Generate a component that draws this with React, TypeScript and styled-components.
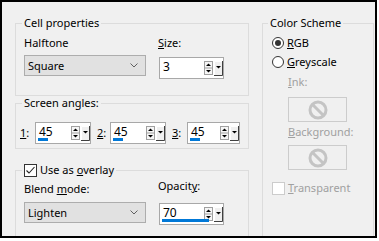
import React from "react";
import styled, { createGlobalStyle } from "styled-components";

const Global = createGlobalStyle`
  html, body { margin: 0; padding: 0; background: #fff; }
  body {
    font-family: "Noto Sans", "Segoe UI", sans-serif;
    font-size: 11px;
    color: #000;
  }
`;

const Frame = styled.div`
  box-sizing: border-box;
  width: 377px;
  height: 238px;
  border: 2px solid #000;
  background: #f0f0f0;
  overflow: hidden;
  display: grid;
  grid-template-columns: 234px 112px;
  column-gap: 13px;
  align-items: start;
  padding: 14px 0 0 13px;
`;

const Column = styled.div`
  display: flex;
  flex-direction: column;
`;

const Group = styled.fieldset<{ $pad: string; $mt?: number }>`
  margin: ${(p) => p.$mt ?? 0}px 0 0 0;
  min-width: 0;
  border: 1px solid #dcdcdc;
  padding: ${(p) => p.$pad};
`;

const Legend = styled.legend<{ $ml: number; $h?: number }>`
  padding: 0 2px;
  margin-left: ${(p) => p.$ml}px;
  line-height: ${(p) => p.$h ?? 14}px;
  height: ${(p) => p.$h ?? 14}px;
  display: flex;
  align-items: center;
  gap: 3px;
`;

const Key = styled.span`
  text-decoration: underline;
  text-underline-offset: 1px;
`;

const Label = styled.div<{ $dim?: boolean; $mt?: number }>`
  line-height: 16px;
  height: 16px;
  white-space: nowrap;
  color: ${(p) => (p.$dim ? "#a0a0a0" : "#000")};
  margin-top: ${(p) => p.$mt ?? 0}px;
`;

const FieldGrid = styled.div`
  display: grid;
  grid-template-columns: 122px 66px;
  column-gap: 12px;
`;

const Field = styled.div<{ $gap: number; $mt?: number }>`
  display: flex;
  flex-direction: column;
  gap: ${(p) => p.$gap}px;
  margin-top: ${(p) => p.$mt ?? 0}px;
`;

const Select = styled.div`
  box-sizing: border-box;
  width: 122px;
  height: 21px;
  background: #e1e1e1;
  border: 1px solid #adadad;
  display: flex;
  align-items: center;
  justify-content: space-between;
  padding: 0 7px 0 3px;
  line-height: 16px;
`;

const SpinBox = styled.div<{ $w: number; $ml?: number }>`
  box-sizing: border-box;
  position: relative;
  width: ${(p) => p.$w}px;
  height: 22px;
  margin-left: ${(p) => p.$ml ?? 0}px;
  background: #fff;
  border: 1px solid #a8a8a8;
  display: flex;
  align-items: center;
  padding: 0 0 0 3px;
`;

const SpinValue = styled.span`
  flex: 1;
  line-height: 16px;
  margin-top: -2px;
  font-size: 12px;
`;

const SpinButtons = styled.div`
  display: flex;
  align-items: flex-start;
  gap: 1px;
  margin-top: 1px;
`;

const Bar = styled.div`
  position: absolute;
  left: 2px;
  bottom: 2px;
  height: 3px;
  background: #0078d7;
`;

const AnglesRow = styled.div`
  display: grid;
  grid-template-columns: 15px 62px 13px 62px 15px 53px;
  align-items: center;
`;

const AngleKey = styled.span`
  line-height: 16px;
`;

const Check = styled.span<{ $dim?: boolean }>`
  box-sizing: border-box;
  width: 13px;
  height: 13px;
  background: #fff;
  border: 1px solid ${(p) => (p.$dim ? "#cccccc" : "#333")};
  display: inline-flex;
  align-items: center;
  justify-content: center;
  flex: none;
`;

const OptionRow = styled.div<{ $mt?: number; $dim?: boolean }>`
  display: flex;
  align-items: center;
  gap: 3px;
  height: 16px;
  line-height: 16px;
  margin-top: ${(p) => p.$mt ?? 0}px;
  color: ${(p) => (p.$dim ? "#a0a0a0" : "#000")};
`;

const ColorBox = styled.div<{ $mt: number }>`
  box-sizing: border-box;
  width: 59px;
  height: 25px;
  margin: ${(p) => p.$mt}px 0 0 16px;
  border: 1px solid #cccccc;
  display: flex;
  align-items: center;
  justify-content: center;
`;

const Indented = styled.div<{ $mt: number }>`
  margin: ${(p) => p.$mt}px 0 0 16px;
`;

const Chevron = () => (
  <svg width="8" height="5" viewBox="0 0 8 5">
    <path d="M0.5 0.5 L4 4 L7.5 0.5" fill="none" stroke="#606060" strokeWidth="1" />
  </svg>
);

const UpDown = () => (
  <svg width="9" height="14" viewBox="0 0 9 14">
    <rect x="0.5" y="0.5" width="8" height="13" fill="#f6f6f6" stroke="#a0a0a0" />
    <line x1="1" y1="7" x2="8" y2="7" stroke="#a0a0a0" />
    <path d="M2 5 L4.5 2.5 L7 5 Z" fill="#000" />
    <path d="M2 9 L4.5 11.5 L7 9 Z" fill="#000" />
  </svg>
);

const DropButton = () => (
  <svg width="9" height="15" viewBox="0 0 9 15">
    <rect x="0" y="0" width="9" height="15" fill="#f0f0f0" />
    <path d="M0.5 14 V0.5 H8" fill="none" stroke="#ffffff" />
    <path d="M8.5 0 V14.5 H0" fill="none" stroke="#404040" />
    <path d="M2 5 L4.5 7.5 L7 5 Z" fill="#000" />
  </svg>
);

const CheckMark = () => (
  <svg width="11" height="11" viewBox="0 0 11 11">
    <path d="M1.5 5.5 L4 8 L9.5 2" fill="none" stroke="#222" strokeWidth="1.1" />
  </svg>
);

const Radio = ({ checked }: { checked?: boolean }) => (
  <svg width="12" height="12" viewBox="0 0 12 12">
    <circle cx="6" cy="6" r="5.5" fill="#fff" stroke="#333" />
    {checked && <circle cx="6" cy="6" r="3" fill="#333" />}
  </svg>
);

const NoSymbol = () => (
  <svg width="20" height="20" viewBox="0 0 20 20">
    <circle cx="10" cy="10" r="8" fill="none" stroke="#c4c4c4" strokeWidth="3" />
    <line x1="4.5" y1="4.5" x2="15.5" y2="15.5" stroke="#c4c4c4" strokeWidth="3" />
  </svg>
);

type SpinProps = { value: string; width: number; bar?: number; ml?: number };

const Spin = ({ value, width, bar, ml }: SpinProps) => (
  <SpinBox $w={width} $ml={ml}>
    <SpinValue>{value}</SpinValue>
    <SpinButtons>
      <UpDown />
      <DropButton />
    </SpinButtons>
    {bar ? <Bar style={{ width: bar }} /> : null}
  </SpinBox>
);

export default function App() {
  return (
    <>
      <Global />
      <Frame>
        <Column>
          <Group $pad="5px 8px 16px 8px">
            <Legend $ml={-2}>Cell properties</Legend>
            <FieldGrid>
              <Field $gap={4}>
                <Label>Halftone</Label>
                <Select>
                  <span>Square</span>
                  <Chevron />
                </Select>
              </Field>
              <Field $gap={6}>
                <Label>
                  <Key>S</Key>ize:
                </Label>
                <Spin value="3" width={65} ml={1} />
              </Field>
            </FieldGrid>
          </Group>

          <Group $pad="12px 4px 4px 4px">
            <Legend $ml={2}>Screen angles:</Legend>
            <AnglesRow>
              <AngleKey>
                <Key>1</Key>:
              </AngleKey>
              <Spin value="45" width={56} bar={10} />
              <AngleKey>
                <Key>2</Key>:
              </AngleKey>
              <Spin value="45" width={56} bar={10} />
              <AngleKey>
                <Key>3</Key>:
              </AngleKey>
              <Spin value="45" width={53} bar={10} />
            </AnglesRow>
          </Group>

          <Group $pad="3px 8px 20px 8px" $mt={13}>
            <Legend $ml={-2} $h={16}>
              <Check>
                <CheckMark />
              </Check>
              <span>
                Use as <Key>o</Key>verlay
              </span>
            </Legend>
            <FieldGrid>
              <Field $gap={5}>
                <Label>
                  Blend <Key>m</Key>ode:
                </Label>
                <Select>
                  <span>Lighten</span>
                  <Chevron />
                </Select>
              </Field>
              <Field $gap={9} $mt={-3}>
                <Label>
                  Opacit<Key>y</Key>:
                </Label>
                <Spin value="70" width={65} ml={1} bar={47} />
              </Field>
            </FieldGrid>
          </Group>
        </Column>

        <Group $pad="5px 8px 60px 9px">
          <Legend $ml={-4}>Color Scheme</Legend>
          <OptionRow>
            <Radio checked />
            <span>
              <Key>R</Key>GB
            </span>
          </OptionRow>
          <OptionRow $mt={3}>
            <Radio />
            <span>
              <Key>G</Key>reyscale
            </span>
          </OptionRow>
          <Indented $mt={4}>
            <Label $dim>
              <Key>I</Key>nk:
            </Label>
          </Indented>
          <ColorBox $mt={7}>
            <NoSymbol />
          </ColorBox>
          <Indented $mt={2}>
            <Label $dim>
              <Key>B</Key>ackground:
            </Label>
          </Indented>
          <ColorBox $mt={5}>
            <NoSymbol />
          </ColorBox>
          <OptionRow $mt={10} $dim>
            <Check $dim />
            <span>
              <Key>T</Key>ransparent
            </span>
          </OptionRow>
        </Group>
      </Frame>
    </>
  );
}
